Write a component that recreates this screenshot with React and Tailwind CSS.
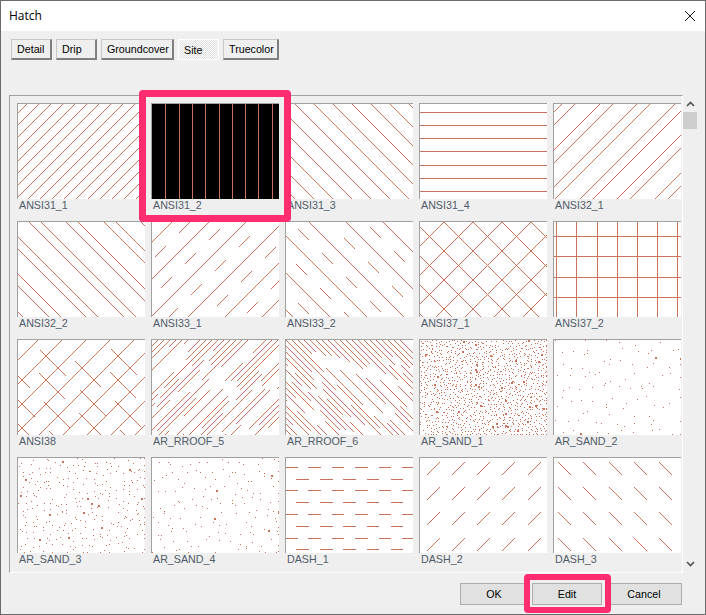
const range = (from, to, step) => {
  const out = [];
  for (let v = from; v <= to; v += step) out.push(v);
  return out;
};

function rng(seed) {
  let s = seed;
  return () => {
    s = (s + 0x6d2b79f5) | 0;
    let t = Math.imul(s ^ (s >>> 15), 1 | s);
    t = (t + Math.imul(t ^ (t >>> 7), 61 | t)) ^ t;
    return ((t ^ (t >>> 14)) >>> 0) / 4294967296;
  };
}

// x + y = c runs up-right, x - y = c runs down-right
const up = (c) => `M${c} 0L${c - 100} 100`;
const down = (c) => `M${c} 0L${c + 100} 100`;
const hline = (y) => `M0 ${y + 0.5}H128`;
const vline = (x) => `M${x + 0.5} 0V96`;

function dashed(c, dir, on, off, start = 0) {
  let d = '';
  for (let y = start; y < 96; y += on + off) {
    const x1 = dir === 'up' ? c - y : c + y;
    const x2 = dir === 'up' ? c - y - on : c + y + on;
    d += `M${x1} ${y}L${x2} ${y + on}`;
  }
  return d;
}

// one dot per cell, so the sand stays even like the real pattern
function sand(seed, cell, keep) {
  const r = rng(seed);
  let d = '';
  for (let cy = 0; cy < 95; cy += cell) {
    for (let cx = 0; cx < 127; cx += cell) {
      const x = Math.min(126, cx + Math.floor(r() * cell));
      const y = Math.min(94, cy + Math.floor(r() * cell));
      const size = r() > 0.97 ? 2 : 1;
      if (r() < keep) d += `M${x} ${y}h${size}v${size}h-${size}z`;
    }
  }
  return d;
}

function roof(seed, dir) {
  const r = rng(seed);
  let d = '';
  const cs = dir === 'up' ? range(6, 224, 6) : range(-96, 124, 6);
  cs.forEach((c) => {
    let y = -Math.floor(r() * 20);
    while (y < 96) {
      const on = 16 + Math.floor(r() * 44);
      const x1 = dir === 'up' ? c - y : c + y;
      const x2 = dir === 'up' ? c - y - on : c + y + on;
      if (r() > 0.2) d += `M${x1} ${y}L${x2} ${y + on}`;
      y += on + 5 + Math.floor(r() * 12);
    }
  });
  return d;
}

function dashRows(rows, cols, dir) {
  let d = '';
  rows.forEach((y) => {
    cols.forEach((x) => {
      d += dir === 'up' ? `M${x} ${y + 13}L${x + 13} ${y}` : `M${x} ${y}L${x + 13} ${y + 13}`;
    });
  });
  return d;
}

const dash1 = [9, 21, 32, 44, 56, 68, 80, 91]
  .map((y, i) =>
    (i % 2 === 0
      ? [[0, 12], [22, 35], [46, 58], [69, 82], [93, 105], [116, 128]]
      : [[10, 23], [34, 47], [57, 70], [81, 93], [105, 117]]
    )
      .map(([a, b]) => `M${a} ${y + 0.5}H${b}`)
      .join('')
  )
  .join('');

const hatches = [
  { name: 'ANSI31_1', d: range(9, 225, 12).map(up).join('') },
  { name: 'ANSI31_2', d: [13, 27, 40, 53, 67, 80, 93, 106, 120].map(vline).join(''), selected: true },
  { name: 'ANSI31_3', d: range(-105, 124, 19).map(down).join('') },
  { name: 'ANSI31_4', d: [8, 21, 34, 47, 61, 74, 87].map(hline).join('') },
  { name: 'ANSI32_1', d: range(8, 230, 37.5).map((c) => up(Math.round(c)) + up(Math.round(c) + 13)).join('') },
  { name: 'ANSI32_2', d: range(-102, 130, 37.5).map((c) => down(Math.round(c)) + down(Math.round(c) + 12)).join('') },
  {
    name: 'ANSI33_1',
    d:
      range(20, 240, 37).map(up).join('') +
      range(38, 250, 37).map((c, i) => dashed(c, 'up', 11, 13, (i * 7) % 20)).join(''),
  },
  {
    name: 'ANSI33_2',
    d:
      range(-88, 128, 37).map(down).join('') +
      range(-106, 128, 37).map((c, i) => dashed(c, 'down', 11, 13, (i * 9) % 20)).join(''),
  },
  { name: 'ANSI37_1', d: range(24, 240, 29).map(up).join('') + range(-92, 128, 29).map(down).join('') },
  { name: 'ANSI37_2', d: [2, 22, 43, 63, 83, 103, 123].map(vline).join('') + [14, 34, 55, 75].map(hline).join('') },
  {
    name: 'ANSI38',
    d:
      range(20, 230, 24).map(up).join('') +
      range(-84, 128, 24).map((c, i) => dashed(c, 'down', 26, 14, (i * 11) % 34)).join(''),
  },
  { name: 'AR_RROOF_5', d: roof(51, 'up') },
  { name: 'AR_RROOF_6', d: roof(77, 'down') },
  { name: 'AR_SAND_1', d: sand(11, 3, 0.85) },
  { name: 'AR_SAND_2', d: sand(23, 11, 0.9) },
  { name: 'AR_SAND_3', d: sand(37, 6, 0.85) },
  { name: 'AR_SAND_4', d: sand(41, 9, 0.9) },
  { name: 'DASH_1', d: dash1 },
  { name: 'DASH_2', d: dashRows([4, 29, 54, 80], [7, 32, 57, 82, 108], 'up') },
  { name: 'DASH_3', d: dashRows([4, 29, 54, 80], [4, 29, 55, 80, 105], 'down') },
];

function Thumb({ hatch }) {
  const isLine = !hatch.name.startsWith('AR_SAND');
  return (
    <div className="flex flex-col">
      <div className={`h-[96px] w-[128px] border-l border-t border-[#a0a0a0] ${hatch.selected ? 'bg-black' : 'bg-white'}`}>
        <svg width="127" height="95" viewBox="0 0 127 95" className="block" shapeRendering="crispEdges">
          <path
            d={hatch.d}
            fill={isLine ? 'none' : '#c8735a'}
            stroke={isLine ? '#c8735a' : 'none'}
            strokeWidth="1"
          />
        </svg>
      </div>
      <div className="h-[22px] pl-[2px] text-[10.7px] leading-[13px] text-[#4f5b68]">{hatch.name}</div>
    </div>
  );
}

function Tab({ children, width, active }) {
  if (active) {
    return (
      <div
        className={`${width} flex h-[21px] items-center border border-white bg-[repeating-conic-gradient(#ffffff_0_25%,#e0e0e0_0_50%)] bg-[length:2px_2px] pl-[5px] pt-[1px] text-[10.7px] text-black`}
      >
        {children}
      </div>
    );
  }
  return (
    <div
      className={`${width} flex h-[21px] items-center border-b-2 border-l border-r-2 border-t border-b-[#7f7f7f] border-l-[#c8c8c8] border-r-[#7f7f7f] border-t-[#c8c8c8] bg-[#efefef] pl-[5px] text-[10.7px] text-black`}
    >
      {children}
    </div>
  );
}

function Button({ children, width }) {
  return (
    <div className={`${width} flex h-[22px] items-center justify-center border border-[#adadad] bg-[#e1e1e1] text-[10.7px] text-black`}>
      {children}
    </div>
  );
}

export default function App() {
  return (
    <div className="relative flex h-[615px] w-[706px] flex-col border border-[#6b6b6b] bg-[#efefef] font-['Liberation_Sans',Arial,sans-serif]">
      <div className="flex h-[30px] shrink-0 items-center justify-between bg-white pl-[8px] pr-[10px] font-['Open_Sans',sans-serif] text-[12px] text-black">
        <span>Hatch</span>
        <svg width="10" height="10" viewBox="0 0 10 10">
          <path d="M0 0L10 10M10 0L0 10" stroke="#111" strokeWidth="1" fill="none" />
        </svg>
      </div>

      <div className="ml-[10px] mt-[8px] flex gap-[4px]">
        <Tab width="w-[41px]">Detail</Tab>
        <Tab width="w-[41px]">Drip</Tab>
        <Tab width="w-[73px]">Groundcover</Tab>
        <Tab width="w-[41px]" active>Site</Tab>
        <Tab width="w-[56px]">Truecolor</Tab>
      </div>

      <div className="ml-[8px] mt-[35px] flex h-[478px]">
        <div className="w-[674px] overflow-hidden border-b border-l border-r border-t border-b-white border-l-[#a0a0a0] border-r-white border-t-[#a0a0a0] pl-[7px] pt-[7px]">
          <div className="grid grid-cols-[repeat(5,128px)] gap-x-[6px]">
            {hatches.map((hatch) => (
              <Thumb key={hatch.name} hatch={hatch} />
            ))}
          </div>
        </div>
        <div className="flex w-[14px] flex-col">
          <div className="flex h-[17px] items-center justify-center">
            <svg width="9" height="6" viewBox="0 0 9 6">
              <path d="M1 5L4.5 1.5L8 5" stroke="#505050" strokeWidth="1.6" fill="none" />
            </svg>
          </div>
          <div className="h-[17px] bg-[#cdcdcd]" />
          <div className="flex-1" />
          <div className="flex h-[17px] items-center justify-center pb-[2px]">
            <svg width="9" height="6" viewBox="0 0 9 6">
              <path d="M1 1L4.5 4.5L8 1" stroke="#505050" strokeWidth="1.6" fill="none" />
            </svg>
          </div>
        </div>
      </div>

      <div className="mr-[23px] mt-[10px] flex justify-end gap-[4px]">
        <Button width="w-[68px]">OK</Button>
        <Button width="w-[70px]">Edit</Button>
        <Button width="w-[76px]">Cancel</Button>
      </div>

      <div className="absolute left-[138px] top-[89px] h-[132px] w-[152px] rounded-[4px] border-[7px] border-[#ff2d6f]" />
      <div className="absolute left-[523px] top-[573px] h-[39px] w-[87px] rounded-[4px] border-[6px] border-[#ff2d6f]" />
    </div>
  );
}
